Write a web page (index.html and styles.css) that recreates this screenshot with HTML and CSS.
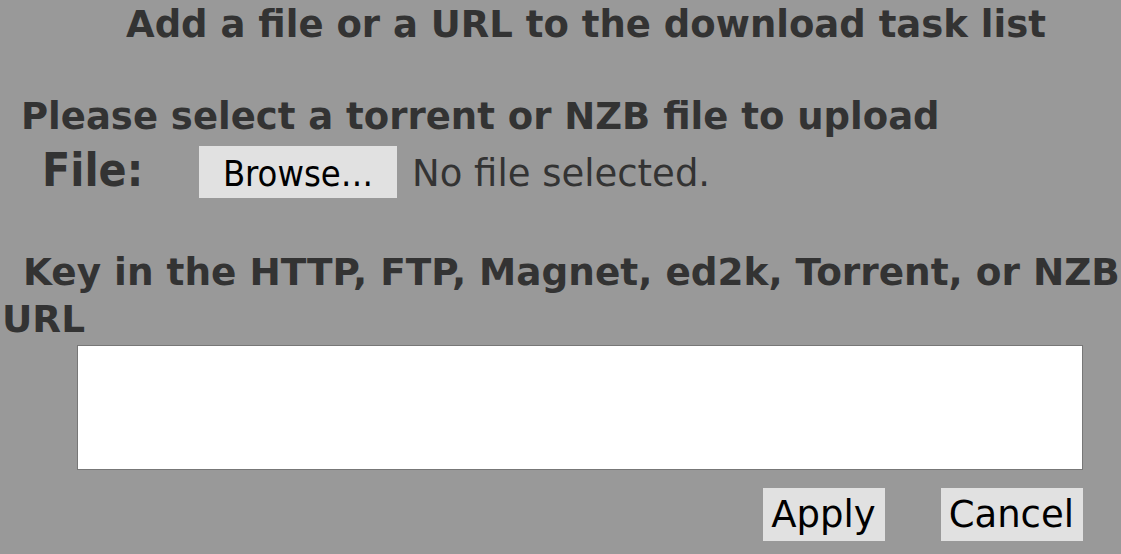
FILE: index.html
```html
<!DOCTYPE html>
<html>
<head>
<meta charset="utf-8">
<link rel="stylesheet" href="styles.css">
</head>
<body>
<div class="dialog">
  <div class="title">Add a file or a URL to the download task list</div>
  <div class="section upload">
    <div class="heading">Please select a torrent or NZB file to upload</div>
    <div class="file-row">
      <span class="file-label">File:</span>
      <span class="file-btn">Browse…</span>
      <span class="file-status">No file selected.</span>
    </div>
  </div>
  <div class="section url">
    <div class="heading wrap">Key in the HTTP, FTP, Magnet, ed2k, Torrent, or NZB URL</div>
    <div class="url-box"><textarea class="url-input"></textarea></div>
  </div>
  <div class="actions">
    <span class="btn">Apply</span>
    <span class="btn">Cancel</span>
  </div>
</div>
</body>
</html>
```

FILE: styles.css
```css
html, body {
  margin: 0;
  padding: 0;
  background: #999999;
  width: 1121px;
  height: 554px;
  overflow: hidden;
}
.dialog {
  font-family: "DejaVu Sans", sans-serif;
  color: #333333;
  padding-top: 2px;
}
.title {
  font-weight: bold;
  font-size: 37px;
  line-height: 46px;
  padding-left: 126px;
  white-space: nowrap;
}
.heading {
  font-weight: bold;
  font-size: 37px;
  line-height: 46px;
  padding-left: 21px;
  white-space: nowrap;
}
.heading.wrap {
  white-space: normal;
  font-size: 37.4px;
  line-height: 47px;
  padding-left: 2px;
  text-indent: 21px;
  width: 1160px;
}
.upload {
  margin-top: 46px;
}
.file-row {
  display: flex;
  align-items: baseline;
  margin-top: 3px;
}
.file-label {
  font-family: "DejaVu Sans Condensed", "DejaVu Sans", sans-serif;
  font-stretch: condensed;
  font-weight: bold;
  font-size: 46px;
  width: 157px;
  padding-left: 42px;
}
.file-btn {
  font-family: "DejaVu Sans Condensed", "DejaVu Sans", sans-serif;
  font-stretch: condensed;
  font-size: 36px;
  color: #000;
  background: #e1e1e1;
  width: 198px;
  height: 52px;
  padding-top: 4px;
  display: inline-flex;
  align-items: center;
  justify-content: center;
  box-sizing: border-box;
}
.file-status {
  font-size: 37px;
  margin-left: 15px;
}
.url {
  margin-top: 51px;
}
.url-box {
  padding-left: 77px;
  margin-top: 2px;
}
.url-input {
  display: block;
  width: 1006px;
  height: 125px;
  box-sizing: border-box;
  border: 1px solid #777;
  background: #fff;
  resize: none;
  margin: 0;
  padding: 0;
}
.actions {
  display: flex;
  justify-content: flex-end;
  gap: 56px;
  padding-right: 38px;
  margin-top: 18px;
}
.btn {
  font-size: 37px;
  color: #000;
  background: #e1e1e1;
  height: 53px;
  padding: 0 9px 0 8px;
  display: flex;
  align-items: center;
}
```
